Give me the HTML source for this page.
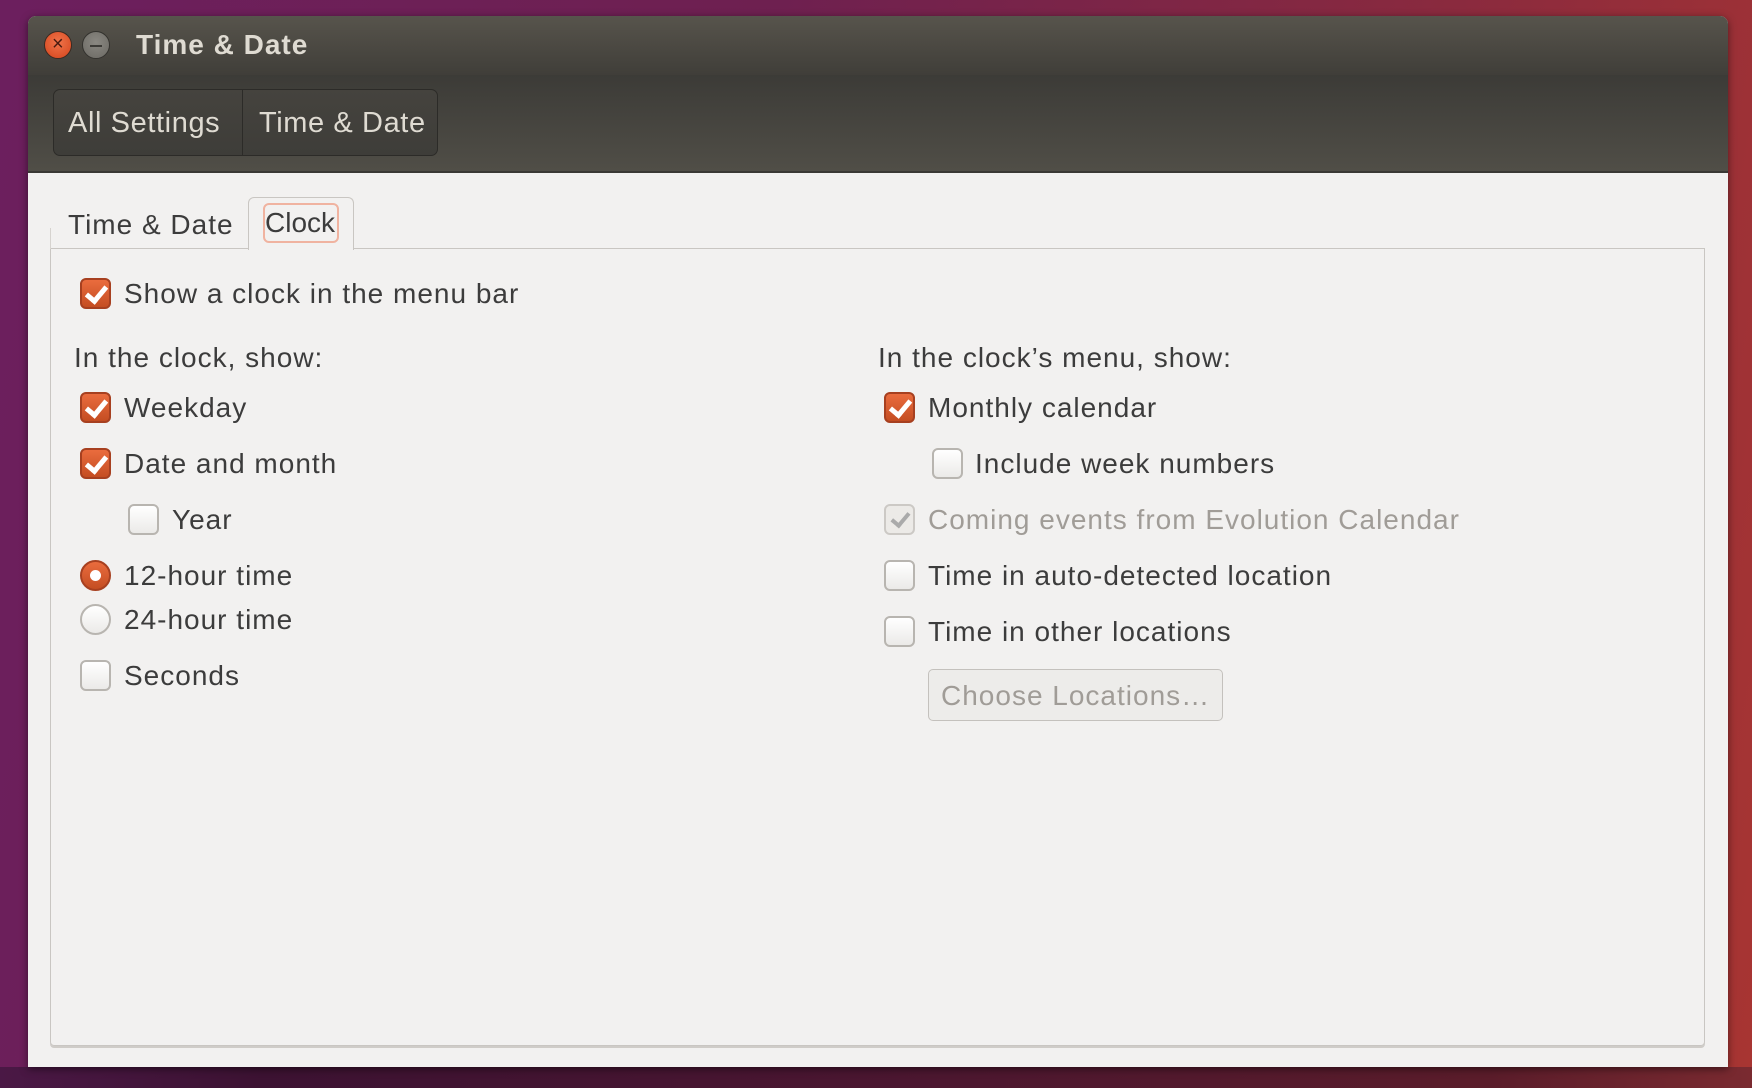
<!DOCTYPE html>
<html><head><meta charset="utf-8"><style>
*{margin:0;padding:0;box-sizing:border-box}
body{width:1752px;height:1088px;overflow:hidden;position:relative;font-family:"Liberation Sans",sans-serif;
background:linear-gradient(100deg,#6c1f5e 0%,#6e2050 40%,#8a2a3e 75%,#a83532 100%);}
.shade{position:absolute;left:0;top:1067px;width:1752px;height:21px;background:linear-gradient(90deg,#4a1845,#3c1232 15%,#4a1630 50%,#5a1c2a 85%,#7a2a30)}
.win{position:absolute;left:28px;top:16px;width:1700px;height:1051px;background:#f2f1f0;border-radius:8px 8px 0 0;overflow:hidden;box-shadow:0 2px 8px rgba(0,0,0,.5)}
.title{position:absolute;left:0;top:0;width:100%;height:59px;background:linear-gradient(#57544c,#403e39)}
.tool{position:absolute;left:0;top:59px;width:100%;height:98px;background:linear-gradient(#3c3b37,#504e47);border-bottom:2px solid #3a3935}
.t{position:absolute;white-space:nowrap}
.btn{position:absolute;top:30px;width:28px;height:28px;border-radius:50%}
.grp{position:absolute;left:25px;top:14px;width:385px;height:67px;border:1px solid #2c2b28;border-radius:7px;background:linear-gradient(#45433e,#3e3d39)}
.lbl{font-size:28px;letter-spacing:1px;color:#3c3c3c}
.cb{position:absolute;width:31px;height:31px;border-radius:6px;border:2px solid #b8b5b0;background:linear-gradient(#fff,#ebeae8)}
.cb.on{background:linear-gradient(#ea6c3e,#c44d22);border-color:#a74020}
.cb.on::after{content:"";position:absolute;left:8px;top:2px;width:8px;height:16px;border:solid #fff;border-width:0 5px 5px 0;transform:rotate(40deg)}
.cb.dis{background:#eceae7;border-color:#ccc9c5}
.cb.dis::after{content:"";position:absolute;left:9px;top:3px;width:7px;height:14px;border:solid #aaa;border-width:0 4px 4px 0;transform:rotate(40deg)}
.rd{position:absolute;width:31px;height:31px;border-radius:50%;border:2px solid #b8b5b0;background:linear-gradient(#fff,#ebeae8)}
.rd.on{background:linear-gradient(#ea6c3e,#c44d22);border-color:#a74020}
.rd.on::after{content:"";position:absolute;left:8px;top:8px;width:11px;height:11px;border-radius:50%;background:#fff}
</style></head><body>
<div class="shade"></div>
<div class="win">
 <div class="title">
  <div class="btn" style="left:16px;top:15px;background:radial-gradient(circle at 50% 40%,#f0744a,#d4441c);border:1px solid #3a2a22"></div>
  <div class="t" style="left:24px;top:17px;color:#4a1a10;font-size:20px;">×</div>
  <div class="btn" style="left:54px;top:15px;background:radial-gradient(circle at 50% 40%,#8a8882,#6b6963);border:1px solid #33322e"></div>
  <div style="position:absolute;left:62px;top:29px;width:12px;height:2px;background:#3c3b37"></div>
  <div class="t" style="left:108px;top:13px;font-size:28px;letter-spacing:1px;font-weight:bold;color:#dfdbd2">Time &amp; Date</div>
 </div>
 <div class="tool">
  <div class="grp"><div style="position:absolute;left:188px;top:0;width:1px;height:100%;background:#2c2b28"></div>
   <div class="t" style="left:14px;top:17px;font-size:29px;letter-spacing:.6px;color:#dfdbd2">All Settings</div>
   <div class="t" style="left:205px;top:17px;font-size:29px;letter-spacing:.6px;color:#dfdbd2">Time &amp; Date</div>
  </div>
 </div>
 <div style="position:absolute;left:22px;top:232px;width:1655px;height:798px;border:1px solid #c9c6c2;border-radius:0 0 4px 4px;box-shadow:0 2px 0 #cfccc8"></div>
 <div style="position:absolute;left:22px;top:212px;width:199px;height:21px;border-left:1px solid #d6d3cf"></div>
 <div style="position:absolute;left:220px;top:181px;width:106px;height:53px;border:1px solid #c9c6c2;border-bottom:none;border-radius:6px 6px 0 0;background:#f2f1f0"></div>
 <div style="position:absolute;left:235px;top:187px;width:76px;height:40px;border:2px solid #f0b3a0;border-radius:6px"></div>
 <div class="t lbl" style="left:40px;top:193px">Time &amp; Date</div>
 <div class="t lbl" style="left:237px;top:191px;letter-spacing:0">Clock</div>

 <div class="cb on" style="left:52px;top:262px"></div><div class="t lbl" style="left:96px;top:262px">Show a clock in the menu bar</div>
 <div class="t lbl" style="left:46px;top:326px">In the clock, show:</div>
 <div class="cb on" style="left:52px;top:376px"></div><div class="t lbl" style="left:96px;top:376px">Weekday</div>
 <div class="cb on" style="left:52px;top:432px"></div><div class="t lbl" style="left:96px;top:432px">Date and month</div>
 <div class="cb" style="left:100px;top:488px"></div><div class="t lbl" style="left:144px;top:488px">Year</div>
 <div class="rd on" style="left:52px;top:544px"></div><div class="t lbl" style="left:96px;top:544px">12-hour time</div>
 <div class="rd" style="left:52px;top:588px"></div><div class="t lbl" style="left:96px;top:588px">24-hour time</div>
 <div class="cb" style="left:52px;top:644px"></div><div class="t lbl" style="left:96px;top:644px">Seconds</div>

 <div class="t lbl" style="left:850px;top:326px">In the clock’s menu, show:</div>
 <div class="cb on" style="left:856px;top:376px"></div><div class="t lbl" style="left:900px;top:376px">Monthly calendar</div>
 <div class="cb" style="left:904px;top:432px"></div><div class="t lbl" style="left:947px;top:432px">Include week numbers</div>
 <div class="cb dis" style="left:856px;top:488px"></div><div class="t lbl" style="left:900px;top:488px;color:#a09c97">Coming events from Evolution Calendar</div>
 <div class="cb" style="left:856px;top:544px"></div><div class="t lbl" style="left:900px;top:544px">Time in auto-detected location</div>
 <div class="cb" style="left:856px;top:600px"></div><div class="t lbl" style="left:900px;top:600px">Time in other locations</div>
 <div style="position:absolute;left:900px;top:653px;width:295px;height:52px;border:1px solid #c4c1bd;border-radius:5px;background:#edecea"></div>
 <div class="t lbl" style="left:913px;top:664px;color:#a09c97">Choose Locations…</div>
</div>
</body></html>
